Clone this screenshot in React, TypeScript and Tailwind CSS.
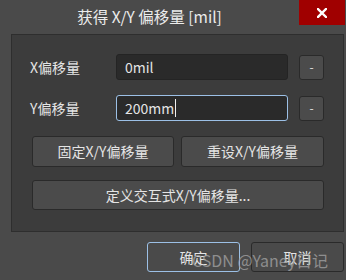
import React from "react";

const font = { fontFamily: '"Noto Sans CJK SC", "Noto Sans", sans-serif' };

export default function App() {
  return (
    <div
      className="relative w-[346px] h-[280px] bg-[#4a4a4a] flex flex-col text-[#e4e4e4] overflow-hidden"
      style={font}
    >
      {/* title bar */}
      <div className="h-[34px] flex">
        <div className="flex-1 flex justify-center pt-[6px] text-[15.5px] leading-[20px] text-[#ececec]">
          获得 X/Y 偏移量 [mil]
        </div>
        <div className="w-[46px] h-[25px] mr-[1px] bg-[#a00000] flex items-center justify-center">
          <svg width="10" height="10" viewBox="0 0 10 10">
            <path d="M1 1 L9 9 M9 1 L1 9" stroke="#ffffff" strokeWidth="2.4" strokeLinecap="square" />
          </svg>
        </div>
      </div>

      {/* panel */}
      <div className="ml-[11px] mr-[2px] h-[198px] border border-[#2e2e2e] bg-[#3c3c3c] pl-[18px] pt-[19px] flex flex-col">
        <div className="flex items-center h-[26px]">
          <div className="w-[86px] text-[14px]">X偏移量</div>
          <div className="w-[172px] h-[26px] rounded-[3px] bg-[#2a2a2a] border border-[#242424] flex items-center pl-[8px] text-[14px]">
            0mil
          </div>
          <div className="ml-[11px] w-[25px] h-[25px] rounded-[3px] bg-[#4b4b4b] border border-[#2a2a2a] flex items-center justify-center text-[12px] leading-none">
            -
          </div>
        </div>
        <div className="flex items-center h-[26px] mt-[15px]">
          <div className="w-[86px] text-[14px]">Y偏移量</div>
          <div className="w-[172px] h-[26px] rounded-[3px] bg-[#2a2a2a] border border-[#9cc0e6] flex items-center pl-[8px] text-[14px]">
            200mm
            <span className="inline-block w-[1px] h-[18px] bg-[#f0f0f0] ml-[1px]" />
          </div>
          <div className="ml-[11px] w-[25px] h-[25px] rounded-[3px] bg-[#4b4b4b] border border-[#2a2a2a] flex items-center justify-center text-[12px] leading-none">
            -
          </div>
        </div>
        <div className="flex ml-[2px] mt-[15px] gap-[7px]">
          <div className="w-[142px] h-[31px] rounded-[3px] bg-[#4b4b4b] border border-[#2a2a2a] flex items-center justify-center text-[14px]">
            固定X/Y偏移量
          </div>
          <div className="w-[143px] h-[31px] rounded-[3px] bg-[#4b4b4b] border border-[#2a2a2a] flex items-center justify-center text-[14px]">
            重设X/Y偏移量
          </div>
        </div>
        <div className="ml-[2px] mt-[13px] w-[292px] h-[30px] rounded-[3px] bg-[#4b4b4b] border border-[#2a2a2a] flex items-center justify-center text-[14px]">
          定义交互式X/Y偏移量...
        </div>
      </div>

      {/* bottom buttons */}
      <div className="flex justify-end gap-[11px] mr-[2px] mt-[10px]">
        <div className="w-[93px] h-[30px] rounded-[3px] bg-[#4a4a4a] border border-[#9cc0e6] flex items-center justify-center text-[14px]">
          确定
        </div>
        <div className="w-[93px] h-[30px] rounded-[3px] bg-[#4a4a4a] border border-[#2a2a2a] flex items-center justify-center text-[14px]">
          取消
        </div>
      </div>

      {/* watermark */}
      <div className="absolute left-[192px] top-[249px] text-[16px] leading-[22px] text-[#a0a0a0] opacity-80 whitespace-nowrap pointer-events-none">
        CSDN @Yaney日记
      </div>
    </div>
  );
}
